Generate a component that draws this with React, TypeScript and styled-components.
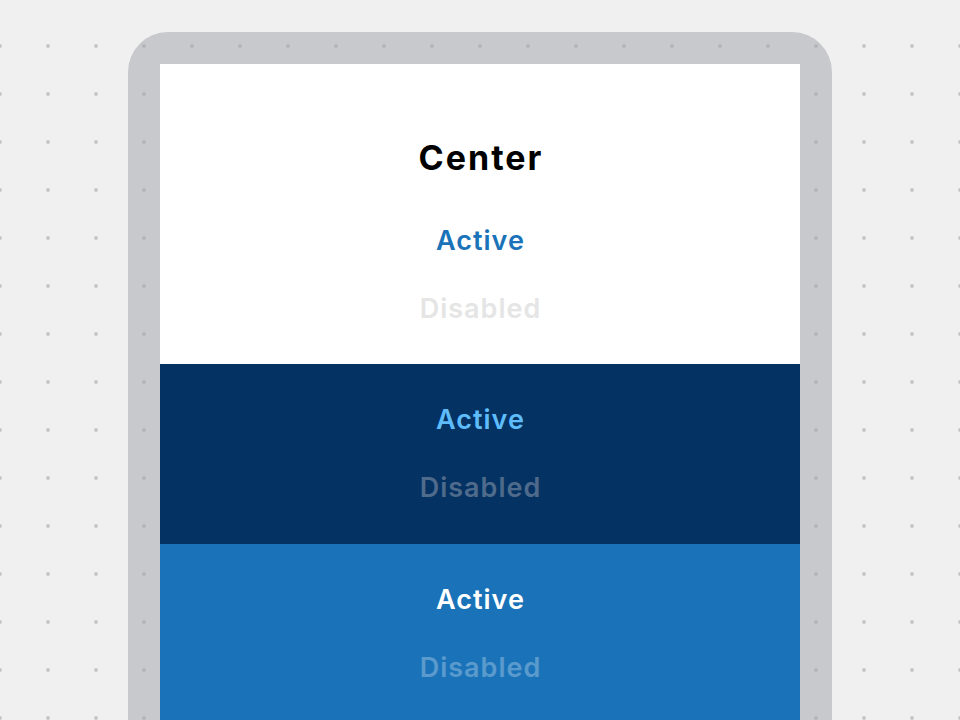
import React from "react";
import styled, { createGlobalStyle } from "styled-components";

const Global = createGlobalStyle`
  html, body {
    margin: 0;
    padding: 0;
    height: 720px;
    overflow: hidden;
  }
  body {
    background-color: #f0f0f0;
    background-image: radial-gradient(circle, #c9c9c9 1.6px, transparent 2.2px);
    background-size: 48px 48px;
    background-position: -24px 22px;
    font-family: Inter, "Open Sans", "Liberation Sans", sans-serif;
  }
`;

const Stage = styled.div`
  display: flex;
  justify-content: center;
  padding-top: 32px;
`;

const Device = styled.div`
  width: 640px;
  padding: 32px;
  border-radius: 40px;
  background-color: #c8c9cc;
  background-image: radial-gradient(circle, #b5b6ba 1.6px, transparent 2.2px);
  background-size: 48px 48px;
  background-position: -8px -10px;
`;

const Screen = styled.div`
  display: flex;
  flex-direction: column;
`;

const themes = {
  light: { bg: "#ffffff", active: "#1a73b8", disabled: "#e5e5e5" },
  navy: { bg: "#043263", active: "#5ebcfa", disabled: "#4f6b8c" },
  blue: { bg: "#1a73b9", active: "#ffffff", disabled: "#5a9acc" },
} as const;

type Variant = keyof typeof themes;

const Section = styled.section<{ $variant: Variant; $top: number; $bottom: number }>`
  display: flex;
  flex-direction: column;
  align-items: center;
  background: ${(p) => themes[p.$variant].bg};
  padding-top: ${(p) => p.$top}px;
  padding-bottom: ${(p) => p.$bottom}px;
`;

const Title = styled.h1`
  margin: 0 0 27px;
  height: 44px;
  line-height: 44px;
  font-size: 34px;
  font-weight: 700;
  color: #000;
  letter-spacing: 2px;
  text-indent: 2px;
`;

const Item = styled.div<{ $variant: Variant; $disabled?: boolean }>`
  height: 68px;
  line-height: 68px;
  font-size: 27px;
  font-weight: 600;
  letter-spacing: 1px;
  text-indent: 1px;
  color: ${(p) => (p.$disabled ? themes[p.$variant].disabled : themes[p.$variant].active)};
`;

const Group = ({ variant, top, bottom, title }: { variant: Variant; top: number; bottom: number; title?: string }) => (
  <Section $variant={variant} $top={top} $bottom={bottom}>
    {title && <Title>{title}</Title>}
    <Item $variant={variant}>Active</Item>
    <Item $variant={variant} $disabled>Disabled</Item>
  </Section>
);

export default function App() {
  return (
    <>
      <Global />
      <Stage>
        <Device>
          <Screen>
            <Group variant="light" top={72} bottom={21} title="Center" />
            <Group variant="navy" top={22} bottom={22} />
            <Group variant="blue" top={22} bottom={60} />
          </Screen>
        </Device>
      </Stage>
    </>
  );
}
